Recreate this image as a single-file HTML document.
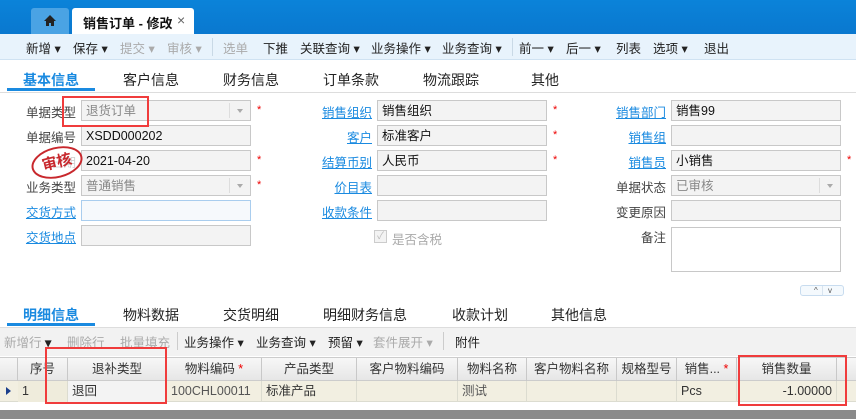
<!DOCTYPE html>
<html><head><meta charset="utf-8"><style>
*{margin:0;padding:0;box-sizing:border-box}
body{width:856px;height:419px;overflow:hidden;background:#fff;font-family:"Liberation Sans","Noto Sans CJK SC",sans-serif;font-size:12px;color:#333;position:relative}
.a{position:absolute;white-space:nowrap}
.top{left:0;top:0;width:856px;height:34px;background:linear-gradient(#0b83d9,#0a78cf)}
.tb{left:0;top:34px;width:856px;height:26px;background:#e8f3fc;border-bottom:1px solid #cfe2f2}
.tb span,.dt span{position:absolute;top:4px;font-size:12.5px;color:#222}
.g{color:#aaa!important}
.lbl{font-size:12.5px;color:#444;text-align:right}
.lnk{color:#1a8ae0;text-decoration:underline;font-size:12.5px;text-align:right}
.in{height:21px;border:1px solid #c8c8c8;background:#f3f3f3;font-size:12.5px;padding:2px 4px 0;line-height:17px;color:#111}
.st{color:#e00;font-size:11px}
.dd{position:absolute;right:0;top:2px;width:21px;height:15px;border-left:1px solid #ddd}
.dd:after{content:"";position:absolute;left:7px;top:6px;border:3px solid transparent;border-top:4px solid #aaa}
.th{top:358px;height:23px;border-right:1px solid #c8c8c8;font-size:12.5px;text-align:center;line-height:23px;color:#333}
.td{top:381px;height:21px;border-right:1px solid #dcdcd0;font-size:12.5px;line-height:21px;padding:0 4px;color:#333}
.red{border:2px solid #f03c3c}
</style></head><body>
<div class="a top"></div>
<div class="a" style="left:31px;top:8px;width:38px;height:26px;background:#4aa3e4;border-radius:3px 3px 0 0"></div>
<svg class="a" style="left:43px;top:14px" width="14" height="13" viewBox="0 0 14 13"><path d="M7 1L1 7h2v5h3V9h2v3h3V7h2z" fill="#222"/></svg>
<div class="a" style="left:72px;top:8px;width:122px;height:26px;background:#fff;border-radius:3px 3px 0 0"></div>
<div class="a" style="left:83px;top:13px;font-size:13px;color:#111;font-weight:bold">销售订单 - 修改</div>
<div class="a" style="left:177px;top:12px;font-size:14px;color:#666">×</div>
<div class="a tb">
<span style="left:26px">新增 ▾</span><span style="left:73px">保存 ▾</span><span class="g" style="left:120px">提交 ▾</span><span class="g" style="left:167px">审核 ▾</span>
<div style="position:absolute;left:212px;top:4px;width:1px;height:18px;background:#c9d9e6"></div>
<span class="g" style="left:223px">选单</span><span style="left:263px">下推</span><span style="left:300px">关联查询 ▾</span><span style="left:371px">业务操作 ▾</span><span style="left:442px">业务查询 ▾</span>
<div style="position:absolute;left:512px;top:4px;width:1px;height:18px;background:#c9d9e6"></div>
<span style="left:519px">前一 ▾</span><span style="left:566px">后一 ▾</span><span style="left:616px">列表</span><span style="left:653px">选项 ▾</span><span style="left:704px">退出</span>
</div>
<!-- tabs -->
<div class="a" style="left:0;top:92px;width:856px;height:1px;background:#ddd"></div>
<div class="a" style="left:7px;top:88px;width:88px;height:3px;background:#1a8ae0"></div>
<div class="a" style="left:23px;top:70px;font-size:14px;color:#1a8ae0;font-weight:bold">基本信息</div>
<div class="a" style="left:123px;top:70px;font-size:14px;color:#222">客户信息</div>
<div class="a" style="left:223px;top:70px;font-size:14px;color:#222">财务信息</div>
<div class="a" style="left:323px;top:70px;font-size:14px;color:#222">订单条款</div>
<div class="a" style="left:423px;top:70px;font-size:14px;color:#222">物流跟踪</div>
<div class="a" style="left:531px;top:70px;font-size:14px;color:#222">其他</div>
<!-- col1 -->
<div class="a lbl" style="right:780px;top:102px">单据类型</div>
<div class="a in" style="left:81px;top:100px;width:170px;color:#888">退货订单<div class="dd"></div></div><div class="a st" style="left:257px;top:104px">*</div>
<div class="a lbl" style="right:780px;top:127px">单据编号</div>
<div class="a in" style="left:81px;top:125px;width:170px">XSDD000202</div>
<div class="a lbl" style="right:780px;top:152px">日期</div>
<div class="a in" style="left:81px;top:150px;width:170px">2021-04-20</div><div class="a st" style="left:257px;top:154px">*</div>
<div class="a lbl" style="right:780px;top:177px">业务类型</div>
<div class="a in" style="left:81px;top:175px;width:170px;color:#888">普通销售<div class="dd"></div></div><div class="a st" style="left:257px;top:179px">*</div>
<div class="a lnk" style="right:780px;top:202px">交货方式</div>
<div class="a in" style="left:81px;top:200px;width:170px;background:#f6f9fc;border-color:#a9cdee"></div>
<div class="a lnk" style="right:780px;top:227px">交货地点</div>
<div class="a in" style="left:81px;top:225px;width:170px"></div>
<div class="a" style="left:31px;top:147px;width:52px;height:31px;border:2px solid #c8282d;border-radius:50%;transform:rotate(-14deg);color:#c8282d;font-weight:bold;font-size:15px;text-align:center;line-height:27px;background:rgba(255,255,255,.75)">审核</div>
<div class="a red" style="left:62px;top:96px;width:87px;height:31px"></div>
<!-- col2 -->
<div class="a lnk" style="right:484px;top:102px">销售组织</div>
<div class="a in" style="left:377px;top:100px;width:170px">销售组织</div><div class="a st" style="left:553px;top:104px">*</div>
<div class="a lnk" style="right:484px;top:127px">客户</div>
<div class="a in" style="left:377px;top:125px;width:170px">标准客户</div><div class="a st" style="left:553px;top:129px">*</div>
<div class="a lnk" style="right:484px;top:152px">结算币别</div>
<div class="a in" style="left:377px;top:150px;width:170px">人民币</div><div class="a st" style="left:553px;top:154px">*</div>
<div class="a lnk" style="right:484px;top:177px">价目表</div>
<div class="a in" style="left:377px;top:175px;width:170px"></div>
<div class="a lnk" style="right:484px;top:202px">收款条件</div>
<div class="a in" style="left:377px;top:200px;width:170px"></div>
<div class="a" style="left:374px;top:230px;width:13px;height:13px;border:1px solid #ccc;background:#f3f3f3;color:#bbb;font-size:10px;line-height:11px;text-align:center">✓</div>
<div class="a" style="left:392px;top:229px;font-size:12.5px;color:#aaa">是否含税</div>
<!-- col3 -->
<div class="a lnk" style="right:190px;top:102px">销售部门</div>
<div class="a in" style="left:671px;top:100px;width:170px">销售99</div>
<div class="a lnk" style="right:190px;top:127px">销售组</div>
<div class="a in" style="left:671px;top:125px;width:170px"></div>
<div class="a lnk" style="right:190px;top:152px">销售员</div>
<div class="a in" style="left:671px;top:150px;width:170px">小销售</div><div class="a st" style="left:847px;top:154px">*</div>
<div class="a lbl" style="right:190px;top:177px">单据状态</div>
<div class="a in" style="left:671px;top:175px;width:170px;color:#888">已审核<div class="dd"></div></div>
<div class="a lbl" style="right:190px;top:202px">变更原因</div>
<div class="a in" style="left:671px;top:200px;width:170px"></div>
<div class="a lbl" style="right:190px;top:227px">备注</div>
<div class="a" style="left:671px;top:227px;width:170px;height:45px;border:1px solid #c8c8c8"></div>
<div class="a" style="left:800px;top:285px;width:44px;height:11px;border:1px solid #c8dcef;border-radius:3px;background:#f4f9fd;font-size:8px;color:#555;line-height:9px"><span style="position:absolute;left:13px">^</span><span style="position:absolute;left:21px;top:0;width:1px;height:9px;background:#d8e4ef"></span><span style="position:absolute;left:27px">v</span></div>
<!-- detail tabs -->
<div class="a" style="left:0;top:327px;width:856px;height:1px;background:#ddd"></div>
<div class="a" style="left:7px;top:323px;width:88px;height:3px;background:#1a8ae0"></div>
<div class="a" style="left:23px;top:305px;font-size:14px;color:#1a8ae0;font-weight:bold">明细信息</div>
<div class="a" style="left:123px;top:305px;font-size:14px;color:#222">物料数据</div>
<div class="a" style="left:223px;top:305px;font-size:14px;color:#222">交货明细</div>
<div class="a" style="left:323px;top:305px;font-size:14px;color:#222">明细财务信息</div>
<div class="a" style="left:452px;top:305px;font-size:14px;color:#222">收款计划</div>
<div class="a" style="left:551px;top:305px;font-size:14px;color:#222">其他信息</div>
<div class="a dt" style="left:0;top:328px;width:856px;height:28px;background:#f2f2f2">
<span class="g" style="left:4px;top:4px">新增行 <b style="color:#222">▾</b></span><span class="g" style="left:67px">删除行</span><span class="g" style="left:120px">批量填充</span>
<div style="position:absolute;left:177px;top:4px;width:1px;height:18px;background:#ccc"></div>
<span style="left:184px">业务操作 ▾</span><span style="left:256px">业务查询 ▾</span><span style="left:328px">预留 ▾</span><span class="g" style="left:373px">套件展开 ▾</span>
<div style="position:absolute;left:443px;top:4px;width:1px;height:18px;background:#ccc"></div>
<span style="left:455px">附件</span>
</div>
<!-- grid -->
<div class="a" style="left:0;top:357px;width:856px;height:24px;background:linear-gradient(#f7f7f7,#e6e6e6);border-top:1px solid #ccc;border-bottom:1px solid #ccc"></div>
<div class="a" style="left:0;top:381px;width:856px;height:21px;background:#f2efe1;border-bottom:1px solid #dcdcd0"></div>
<div class="a" style="left:18px;top:381px;width:50px;height:21px;background:#efecdc"></div>
<div class="a" style="left:68px;top:381px;width:99px;height:21px;background:#f3f3f3"></div>
<div class="a th" style="left:0;width:18px"></div>
<div class="a th" style="left:18px;width:50px">序号</div>
<div class="a th" style="left:68px;width:99px">退补类型</div>
<div class="a th" style="left:167px;width:95px">物料编码 <span style="color:#e00">*</span></div>
<div class="a th" style="left:262px;width:95px">产品类型</div>
<div class="a th" style="left:357px;width:101px">客户物料编码</div>
<div class="a th" style="left:458px;width:69px">物料名称</div>
<div class="a th" style="left:527px;width:90px">客户物料名称</div>
<div class="a th" style="left:617px;width:60px">规格型号</div>
<div class="a th" style="left:677px;width:60px">销售... <span style="color:#e00">*</span></div>
<div class="a th" style="left:737px;width:100px">销售数量</div>
<div class="a" style="left:6px;top:387px;border:4px solid transparent;border-left:5px solid #1c3f8c;border-right:0"></div>
<div class="a td" style="left:18px;width:50px">1</div>
<div class="a td" style="left:68px;width:99px">退回</div>
<div class="a td" style="left:167px;width:95px;color:#555">100CHL00011</div>
<div class="a td" style="left:262px;width:95px">标准产品</div>
<div class="a td" style="left:357px;width:101px"></div>
<div class="a td" style="left:458px;width:69px;color:#555">测试</div>
<div class="a td" style="left:527px;width:90px"></div>
<div class="a td" style="left:617px;width:60px"></div>
<div class="a td" style="left:677px;width:60px">Pcs</div>
<div class="a td" style="left:737px;width:100px;text-align:right">-1.00000</div>
<div class="a" style="left:0;top:410px;width:856px;height:9px;background:#8a8a8a"></div>
<div class="a red" style="left:45px;top:347px;width:122px;height:57px"></div>
<div class="a red" style="left:738px;top:355px;width:109px;height:51px"></div>
</body></html>
